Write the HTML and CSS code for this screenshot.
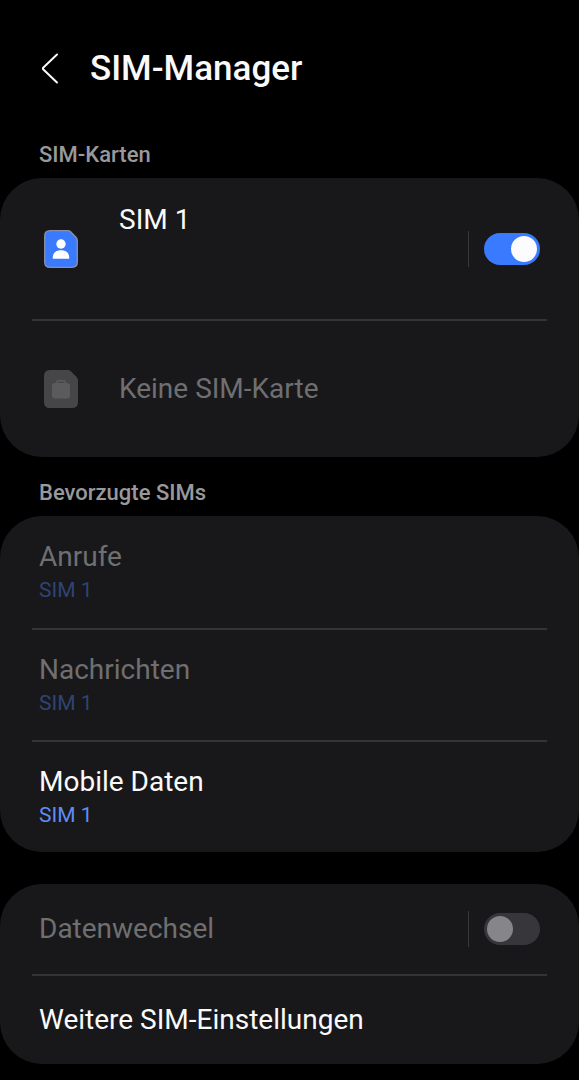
FILE: index.html
```html
<!DOCTYPE html>
<html lang="de">
<head>
    <meta charset="UTF-8">
    <meta name="viewport" content="width=device-width, initial-scale=1">
    <title>SIM-Manager</title>
    <link rel="stylesheet" href="styles.css">
</head>
<body>
    <header class="header">
        <button class="back" aria-label="Zurück">
            <svg width="20" height="32" viewBox="0 0 20 32" fill="none" stroke="currentColor" stroke-width="2" stroke-linecap="round" stroke-linejoin="round">
                <path d="M17 1.500 L3.400 14.500 Q2.400 15.500 3.400 16.500 L17 29.500"/>
            </svg>
        </button>
        <h1 class="title">SIM-Manager</h1>
    </header>

    <main>
        <h2 class="section-title">SIM-Karten</h2>
        <section class="card">
            <div class="row sim-row">
                <svg class="sim-icon" width="34" height="38" viewBox="0 0 34 38">
                    <path d="M6 .7 H24 Q25.500 .7 26.600 1.800 L32 7.200 Q33.300 8.500 33.300 10.500 V32 Q33.300 37.300 28 37.300 H6 Q.7 37.300 .7 32 V6 Q.7 .7 6 .7Z" fill="#3a7aff" stroke="#8b90a8" stroke-width="1.300"/>
                    <circle cx="17" cy="14" r="4.700" fill="#fff"/>
                    <path d="M8.800 28.800 V27.500 C8.800 23 12 20.300 17 20.300 S25.200 23 25.200 27.500 V28.800Z" fill="#fff"/>
                </svg>
                <label class="label top" for="sim1">SIM 1</label>
                <span class="divider"></span>
                <input class="switch" type="checkbox" role="switch" id="sim1" checked>
            </div>
            <div class="row empty-row disabled">
                <svg class="sim-icon" width="34" height="38" viewBox="0 0 34 38">
                    <path d="M6 0 H24 Q25.500 0 26.600 1.100 L32.500 7 Q34 8.500 34 10.500 V32 Q34 38 28 38 H6 Q0 38 0 32 V6 Q0 0 6 0Z" fill="#464648"/>
                    <rect x="8" y="13" width="18" height="15.500" rx="3" fill="#5b5b5d"/>
                    <path d="M12.800 13.500 V12.500 Q12.800 10.800 14.500 10.800 H19.500 Q21.200 10.800 21.200 12.500 V13.500" fill="none" stroke="#5b5b5d" stroke-width="1.600"/>
                </svg>
                <span class="label">Keine SIM-Karte</span>
            </div>
        </section>

        <h2 class="section-title">Bevorzugte SIMs</h2>
        <section class="card">
            <button class="row pref" disabled>
                <span class="label">Anrufe</span>
                <span class="value">SIM 1</span>
            </button>
            <button class="row pref" disabled>
                <span class="label">Nachrichten</span>
                <span class="value">SIM 1</span>
            </button>
            <button class="row pref">
                <span class="label">Mobile Daten</span>
                <span class="value">SIM 1</span>
            </button>
        </section>

        <section class="card spaced">
            <div class="row disabled">
                <label class="label" for="datenwechsel">Datenwechsel</label>
                <span class="divider"></span>
                <input class="switch" type="checkbox" role="switch" id="datenwechsel" disabled>
            </div>
            <a class="row" href="#">
                <span class="label">Weitere SIM-Einstellungen</span>
            </a>
        </section>
    </main>
</body>
</html>
```

FILE: styles.css
```css
* {
    box-sizing: border-box;
}

body {
    margin: 0;
    background: #000;
    color: #fafafa;
    font-family: Roboto, 'Open Sans', sans-serif;
}

.header {
    display: flex;
    align-items: center;
    gap: 30px;
    padding: 45px 40px 26px;
}

.back {
    display: flex;
    padding: 8px 0;
    border: none;
    background: none;
    color: inherit;
    cursor: pointer;
}

.title {
    margin: 0;
    font-size: 35px;
    line-height: 48px;
    font-weight: 500;
}

.section-title {
    margin: 0;
    padding: 18px 39px 5px;
    font-size: 22px;
    line-height: 36px;
    font-weight: 500;
    color: #99999b;
}

.card {
    padding: 0 32px;
    border-radius: 42px;
    background: #18181a;
}

.spaced {
    margin-top: 32px;
}

.row {
    display: flex;
    align-items: center;
    width: 100%;
    min-height: 90px;
    padding: 0 7px;
    border: none;
    background: none;
    color: inherit;
    font-family: inherit;
    text-align: left;
    text-decoration: none;
}

.row + .row {
    border-top: 2px solid #343436;
}

.label {
    flex: 1;
    font-size: 28px;
    line-height: 36px;
}

.sim-row {
    min-height: 141px;
}

.empty-row {
    min-height: 138px;
}

.sim-icon {
    margin: 0 41px 0 5px;
}

.top {
    align-self: flex-start;
    padding-top: 24px;
}

.pref {
    flex-direction: column;
    align-items: flex-start;
    justify-content: center;
    min-height: 112px;
    cursor: pointer;
}

.pref .label {
    flex: none;
}

.value {
    font-size: 21px;
    line-height: 30px;
    color: #5f8df5;
}

.disabled,
.pref:disabled {
    color: #6f6f71;
    cursor: default;
}

.pref:disabled .value {
    color: #2f4473;
}

.divider {
    width: 1px;
    height: 36px;
    margin-right: 15px;
    background: #38383a;
}

.switch {
    appearance: none;
    display: flex;
    width: 56px;
    height: 32px;
    margin: 0;
    padding: 3px;
    border-radius: 16px;
    background: #37373b;
    cursor: pointer;
}

.switch::before {
    content: '';
    width: 26px;
    height: 26px;
    border-radius: 50%;
    background: #fcfcfe;
}

.switch:checked {
    justify-content: flex-end;
    background: #3a7aff;
}

.switch:disabled {
    cursor: default;
}

.switch:disabled::before {
    background: #868688;
}
```
